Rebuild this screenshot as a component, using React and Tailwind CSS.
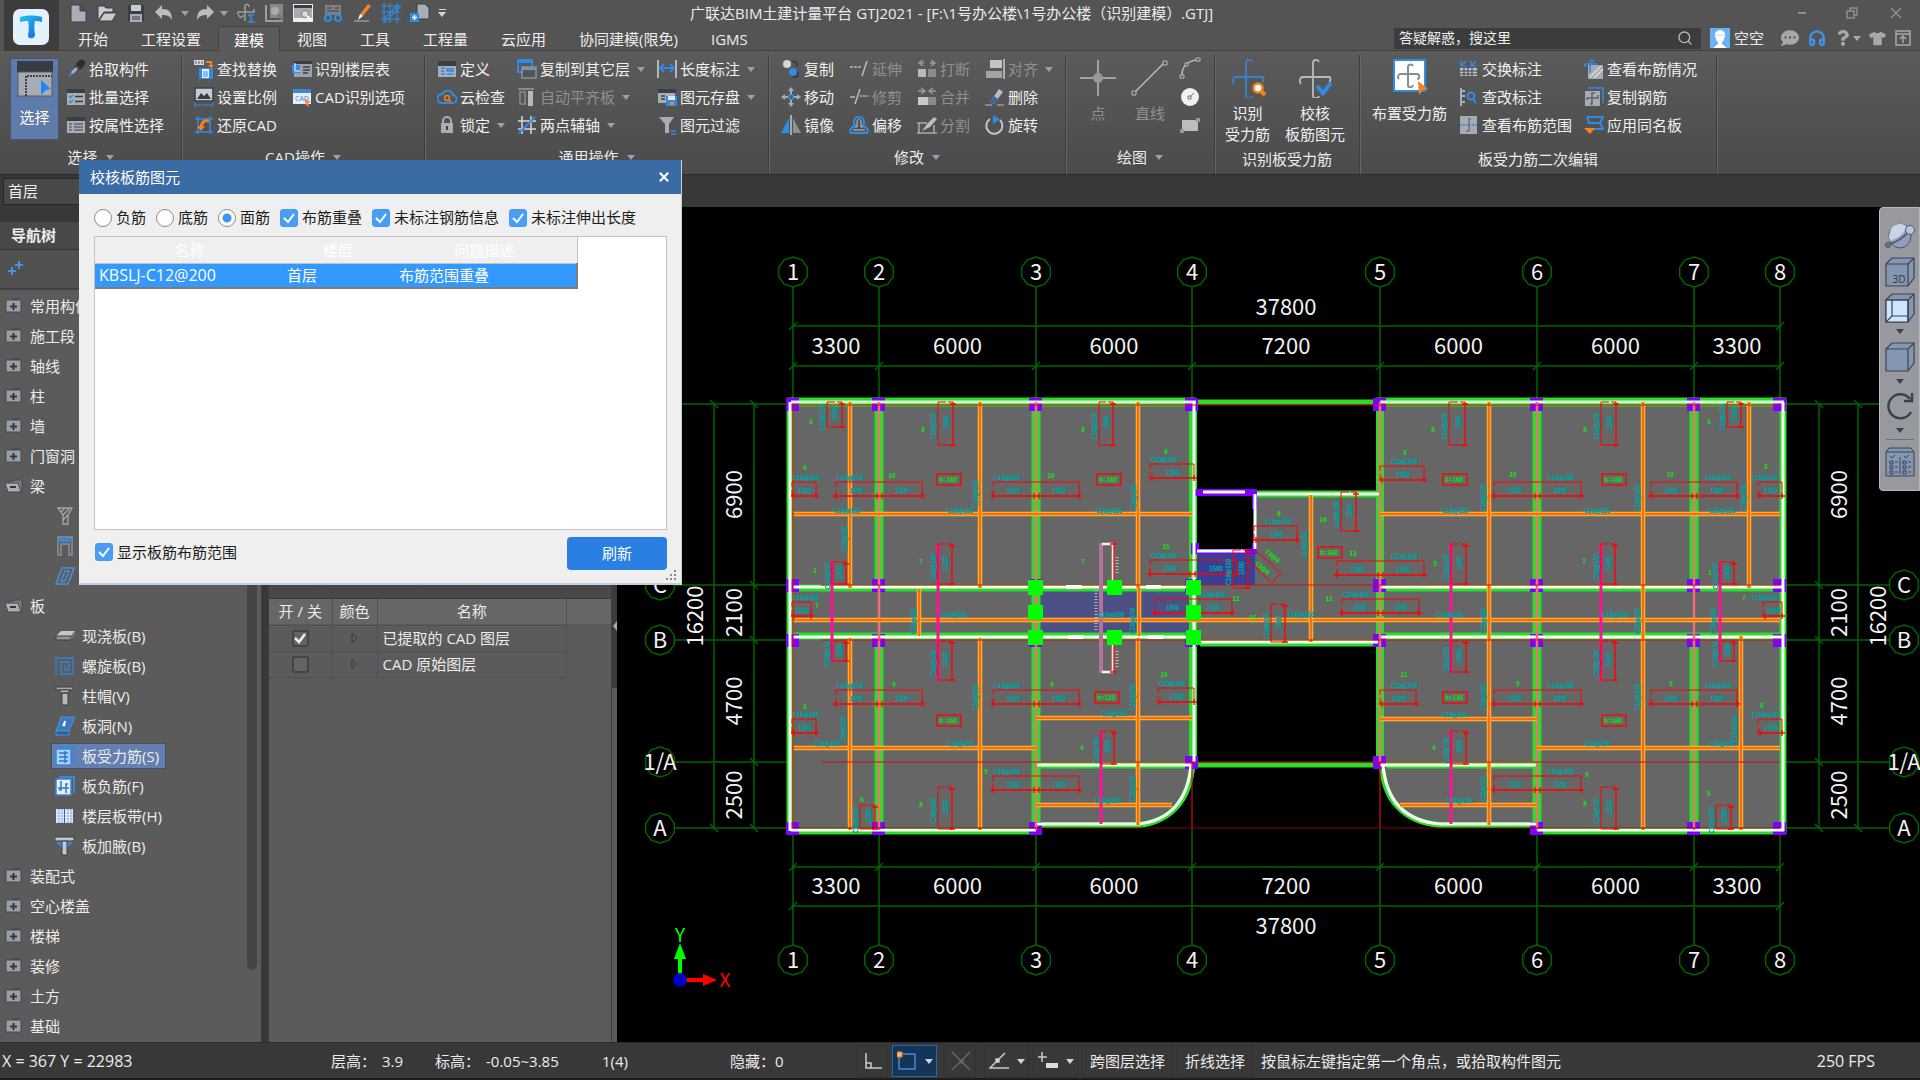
import { Fragment } from "react";
import { FaQuestion, FaTshirt, FaCommentDots } from "react-icons/fa";
import { Headphones, Search } from "lucide-react";
import { clsx } from "clsx";

/* ---------- icons ---------- */

const G = "#a9adb5";
const B = "#2f8be8";
const O = "#f58220";
const D = "#3a3e45";

const icons = {
  picker: (
    <>
      <path d="M2 18l3-5 6-6 2 2-6 6z" fill={B} />
      <path d="M9 7l4 4M11 5l4 4 3-4c1-3-2-4-4-3z" stroke="#2b2e33" strokeWidth="2" fill="#2b2e33" />
      <path d="M5 13l5-5 2 2-5 5z" fill={G} />
    </>
  ),
  batch: (
    <>
      <path d="M1 2h18v4H1z" fill={D} />
      <path d="M1 6h18v12H1z" fill={G} />
      <path d="M3 9l1.5 1.5L7 8M3 14l1.5 1.5L7 13" stroke={B} strokeWidth="1.5" fill="none" />
      <path d="M9 9.5h8M9 14.5h8" stroke={D} strokeWidth="1.5" />
    </>
  ),
  attr: (
    <>
      <path d="M1 2h18v4H1z" fill={D} />
      <path d="M1 6h18v12H1z" fill={G} />
      <path d="M3 9h3M3 12h3M3 15h3M8 9h9M8 12h9M8 15h9" stroke="#5f646d" strokeWidth="1.5" />
    </>
  ),
  replace: (
    <>
      <path d="M0 1h10v5H0z" fill="#d8dade" />
      <path d="M2 2v3M5 2v3M8 2v3" stroke="#555" />
      <path d="M12 3h5v3" stroke={O} strokeWidth="2" fill="none" />
      <path d="M14 6h6l-3 3z" fill={O} />
      <path d="M5 9h14v11H5z" fill={B} />
      <path d="M8 10h7v9H8z" fill="#e9f2fc" />
      <path d="M9 13h5M9 15h5M9 17h5" stroke={B} />
    </>
  ),
  scale: (
    <>
      <path d="M1 1h18v13H1z" fill="#c9cbd2" stroke={D} strokeWidth="1.5" />
      <path d="M3 12l4-6 3 3 3-3 4 6z" fill={D} />
      <path d="M1 18h18M1 16v4M19 16v4" stroke={B} strokeWidth="1.5" strokeDasharray="2 1" />
    </>
  ),
  restore: (
    <>
      <path d="M4 1v18M16 1v18M1 4h18M1 17h18" stroke={B} strokeWidth="1.5" />
      <path d="M15 6c-6-1-8 3-8 7" stroke={O} strokeWidth="3" fill="none" />
      <path d="M3 11h8l-4 5z" fill={O} />
    </>
  ),
  floorTable: (
    <>
      <path d="M2 2h18v4H2z" fill={D} />
      <path d="M2 5h18v13H2z" fill="#9da2aa" />
      <path d="M11 8h7M11 11h7M11 14h5" stroke={D} strokeWidth="1.5" />
      <path d="M0 6h8v8H0z" fill={B} />
      <path d="M3 4v8h5" stroke="#fff" fill="none" />
    </>
  ),
  cadOption: (
    <>
      <path d="M1 2h18v4H1z" fill="#3b86d8" />
      <path d="M1 6h18v11H1z" fill="#e5effa" />
      <text x="10" y="14" fontSize="7" textAnchor="middle" fill={B}>CAD</text>
      <path d="M12 11l7 4-3 1 1 4-3-2z" fill="#f08a5a" />
    </>
  ),
  define: (
    <>
      <path d="M1 2h18v5H1z" fill={D} />
      <path d="M1 7h18v11H1z" fill={G} />
      <path d="M4 9h4M4 12h3M4 15h4M10 10h6v2h-6zM10 15h6" stroke={B} fill="none" strokeWidth="1.5" />
    </>
  ),
  cloud: (
    <>
      <path d="M5 16a4.5 4.5 0 0 1 0-9 6 6 0 0 1 11 1 4 4 0 0 1-1 8z" fill="none" stroke={B} strokeWidth="2" />
      <circle cx="10" cy="11" r="2.5" fill="none" stroke={O} strokeWidth="1.5" />
      <path d="M12 13l2 2" stroke={O} strokeWidth="1.5" />
    </>
  ),
  lock: (
    <>
      <path d="M6 9V6a4 4 0 0 1 8 0v3" fill="none" stroke={G} strokeWidth="2" />
      <path d="M4 8h12v10H4z" fill={G} />
      <path d="M10 11v4" stroke={D} strokeWidth="2" />
    </>
  ),
  copyFloor: (
    <>
      <path d="M1 1h14v12H1z" fill="none" stroke={B} strokeWidth="2" />
      <path d="M1 1h14v3H1z" fill={B} />
      <path d="M5 8h14v11H5z" fill="#555" stroke="#84929c" strokeWidth="1.5" />
      <path d="M5 8h14v3H5z" fill="#84929c" />
    </>
  ),
  autoAlign: (
    <>
      <path d="M1 2h16" stroke="#9a9a9a" strokeWidth="1.5" />
      <path d="M3 5h5v12H3z" fill="none" stroke="#8a8a8a" strokeWidth="1.5" />
      <path d="M11 4h5v15h-5z" fill="#b8b8b8" />
    </>
  ),
  twoPoint: (
    <>
      <path d="M5 1v18M14 1v18M1 6h18M1 14h18" stroke="#d4d6da" strokeWidth="1.5" />
      <path d="M2 18L18 2" stroke={B} strokeWidth="2" />
    </>
  ),
  length: (
    <>
      <path d="M1 1v18M19 1v18" stroke="#d4d6da" strokeWidth="1.5" />
      <path d="M4 9h12M7 5L3 9l4 4M13 5l4 4-4 4" stroke={B} strokeWidth="2" fill="none" />
    </>
  ),
  save: (
    <>
      <path d="M1 2h18v4H1z" fill={D} />
      <path d="M1 6h17v10H1z" fill={G} />
      <path d="M4 9h4M4 12h4" stroke={D} strokeWidth="1.5" />
      <path d="M9 9h11v10H9z" fill={B} />
      <path d="M11 9h7v4h-7z" fill="#dfe9f5" />
      <path d="M13 15h4v3h-4z" fill={O} />
    </>
  ),
  filter: (
    <>
      <path d="M2 2h15l-5 7v9H8V9z" fill={G} />
      <path d="M14 16h5M14 19h5" stroke={B} strokeWidth="1.5" />
    </>
  ),
  copy: (
    <>
      <circle cx="6" cy="5" r="4" fill="#d5d5d5" />
      <path d="M11 3c4-1 6 1 5 4" stroke={D} strokeWidth="2" fill="none" />
      <circle cx="14" cy="15" r="4" fill={D} />
      <circle cx="12" cy="13" r="4" fill={B} />
    </>
  ),
  move: (
    <>
      <path d="M10 0l3 4h-2v3H9V4H7zM10 20l3-4h-2v-3H9v3H7zM0 10l4-3v2h3v2H4v2zM20 10l-4-3v2h-3v2h3v2z" fill={G} />
      <path d="M8 8h4v4H8z" fill="none" stroke={B} strokeWidth="1.5" />
    </>
  ),
  mirror: (
    <>
      <path d="M8 3v15H0z" fill={B} />
      <path d="M12 3v15h8z" fill="#8b8f97" />
      <path d="M10 0v20" stroke="#c4c6ca" strokeWidth="1.5" />
    </>
  ),
  extend: <path d="M1 8h3M5 8h3M9 8h3M13 17l5-15" stroke="#bbb" strokeWidth="1.5" fill="none" />,
  trim: <path d="M1 10h5M6 17l5-15M11 9h2M14 9h2M17 9h2" stroke="#bbb" strokeWidth="1.5" />,
  offset: (
    <>
      <path d="M2 18h16c2-3 0-6-4-7 2-4 1-9-4-9S4 7 6 11c-4 1-6 4-4 7z" fill="none" stroke={B} strokeWidth="2" />
      <path d="M4 15h12M8 12V6c1-2 3-2 4 0v6M8 12H6M12 12h2" stroke="#c4c6ca" fill="none" />
    </>
  ),
  break: (
    <>
      <path d="M6 1L2 4l4 3M14 1l4 3-4 3M2 4h5M18 4h-5" stroke="#999" strokeWidth="1.5" fill="none" />
      <path d="M1 10h8v8H1z" fill="#b9b9b9" />
      <path d="M11 10h8v8h-8z" fill="#8a8a8a" />
    </>
  ),
  merge: (
    <>
      <path d="M4 1l4 3-4 3M16 1l-4 3 4 3M1 4h6M19 4h-6" stroke="#999" strokeWidth="1.5" fill="none" />
      <path d="M1 10h10v8H1z" fill="#c9c9c9" />
      <path d="M11 10h8v8h-8z" fill="#8a8a8a" />
    </>
  ),
  split: (
    <>
      <path d="M2 8v10h15v-8M0 8h10M0 18h20" stroke="#aaa" strokeWidth="1.5" fill="none" />
      <path d="M5 16l5-7 7-7 3 2-7 8z" fill="#bdbdbd" />
    </>
  ),
  align: (
    <>
      <path d="M5 1h12v8H5z" fill="#c4c4c4" />
      <path d="M1 12h16v7H1z" fill="#a4a4a4" />
      <path d="M19 0v20" stroke="#ccc" strokeWidth="1.5" />
    </>
  ),
  erase: (
    <>
      <path d="M5 15l9-13 4 3-9 12z" fill="#b9bcc2" />
      <path d="M5 15l4-6 4 3-4 5z" fill="#38689c" />
      <path d="M0 18h7M12 18h7" stroke="#999" strokeWidth="1.5" />
    </>
  ),
  rotate: (
    <>
      <path d="M5 4a8 8 0 1 0 10 1" fill="none" stroke="#c4c6ca" strokeWidth="2" />
      <path d="M8 0l7 4-7 5z" fill={B} />
    </>
  ),
  swap: (
    <>
      <path d="M3 6l4-4M2 2v5h5M13 6l4-4M12 2v5h5" stroke={B} fill="none" strokeWidth="1.5" />
      <path d="M1 9h17v8H1z" fill="#c0c3c9" />
      <path d="M1 12h17M1 15h17M5 9v8M9 9v8M13 9v8" stroke={D} />
    </>
  ),
  check: (
    <>
      <path d="M2 1v18M2 4h4M2 9h4M2 15h4" stroke={G} strokeWidth="2" />
      <circle cx="12" cy="9" r="3.5" fill="none" stroke={B} strokeWidth="2" />
      <path d="M14 12l3 4" stroke={B} strokeWidth="2" />
    </>
  ),
  range: (
    <>
      <path d="M1 1h17v18H1z" fill="#a7abb3" />
      <path d="M1 10h17" stroke={B} strokeWidth="1.5" strokeDasharray="2 1" />
      <path d="M12 4h-2v12H7" stroke="#6c7078" strokeWidth="1.5" fill="none" />
    </>
  ),
  rebarInfo: (
    <>
      <path d="M4 6h15v14H4z" fill="#a7abb3" />
      <path d="M6 18L17 7M10 19l9-9" stroke="#d8dadf" strokeWidth="1.5" />
      <path d="M6 14V3c0-3 4-2 3 0M1 8V5h12" stroke={B} strokeWidth="1.5" fill="none" />
    </>
  ),
  copyBar: (
    <>
      <path d="M4 1h15v15" stroke={B} strokeWidth="1.5" fill="none" />
      <path d="M1 4h15v15H1z" fill="#a7abb3" />
      <path d="M11 6H8v11H6M3 13v-2h11v-3" stroke="#5e636b" strokeWidth="1.5" fill="none" />
    </>
  ),
  applySame: (
    <>
      <path d="M3 2h16l-3 6 3 6H9M3 2l2 6h11" fill="none" stroke={B} strokeWidth="2" />
      <path d="M0 13h11l-5 6z" fill={O} />
    </>
  ),
};

function Ico({ name }) {
  return (
    <svg viewBox="0 0 20 20" className="size-5 shrink-0" aria-hidden="true">
      {icons[name]}
    </svg>
  );
}

function Caret({ className }) {
  return (
    <svg viewBox="0 0 8 5" className={clsx("h-[5px] w-2 shrink-0", className)} aria-hidden="true">
      <path d="M0 0h8L4 5z" fill="currentColor" />
    </svg>
  );
}

/* ---------- title bar ---------- */

const quickIcons = [
  ["新建", "w-[29px]", <path d="M3 2h9l6 6v11H3z M12 2v6h6" fill={G} stroke={D} strokeWidth="1" />],
  ["打开", "w-[29px]", <path d="M1 18V3h6l2 2h7v4H7z M7 10h13l-5 8H2z" fill="#c9cbd0" stroke={D} strokeWidth="1" />],
  ["保存", "w-[29px]", <><path d="M2 2h16v16H2z" fill={D} /><path d="M5 2h10v6H5z" fill="#c9cbd0" /><path d="M4 11h12v8H4z" fill={G} /><path d="M6 14h8M6 16h8" stroke={D} /></>],
  ["撤销", "w-[28px]", <path d="M8 2v4c7 0 10 3 10 11-2-4-5-5-10-5v4L1 9z" fill="#b9bcc4" />],
  ["caret", "w-[14px]"],
  ["恢复", "w-[25px]", <path d="M12 2v4C5 6 2 9 2 17c2-4 5-5 10-5v4l7-7z" fill="#b9bcc4" />],
  ["caret", "w-[14px]"],
  ["汇总", "w-[29px]", <><path d="M9 18V4c0-4 4-3 4 0M2 12V9h16v-3M3 12c0 3 4 3 4 0" stroke="#9a9da3" strokeWidth="1.5" fill="none" /><path d="M18 12h-5l3 4-3 3h6" stroke={B} strokeWidth="1.5" fill="none" /></>],
  ["查看", "w-[28px]", <><path d="M2 2v16h17" stroke="#9a9da3" strokeWidth="2" fill="none" /><path d="M6 1h13v14H6z" fill="#85888e" /><circle cx="11" cy="8" r="4" fill="#aaa" /><path d="M14 11l5 6" stroke="#777" strokeWidth="3" /></>],
  ["报表", "w-[30px]", <><path d="M0 1h20v18H0z" fill="#eceded" /><path d="M1 3h18v12H1z" fill="#a7abb3" /><path d="M1 2h18v3H1z" fill={D} /><circle cx="12" cy="11" r="3.5" fill="#ddd" stroke="#777" /><path d="M14 13l4 4" stroke="#fff" strokeWidth="2" /></>],
  ["构件", "w-[29px]", <><path d="M2 2h16v10H2z" fill="#7d8087" /><path d="M4 5h5M12 5h4M4 8h12" stroke={D} /><circle cx="5" cy="15" r="3" fill="none" stroke={B} strokeWidth="2" /><circle cx="15" cy="15" r="3" fill="none" stroke={B} strokeWidth="2" /></>],
  ["格式刷", "w-[29px]", <><path d="M16 1l3 2-8 10-3-2z" fill={O} /><path d="M8 11l3 2-5 4z" fill="#fff" /><path d="M2 18h15" stroke="#999" strokeWidth="1.5" /></>],
  ["轴网", "w-[29px]", <path d="M3 0v20M9 0v20M16 0v20M0 3h20M0 9h20M0 16h20M3 16L16 3M3 20L20 3" stroke={B} strokeWidth="1.2" fill="none" />],
  ["添加", "w-[29px]", <><path d="M7 1h8l4 4v11H7z" fill={G} stroke={D} /><path d="M0 10h9v9H0z" fill={B} /><path d="M4.5 12v5M2 14.5h5" stroke="#fff" strokeWidth="1.5" /></>],
];

function QuickAccess() {
  return (
    <div className="flex h-[26px] items-center pl-1">
      {quickIcons.map(([name, width, art], i) =>
        name === "caret" ? (
          <button key={i} aria-label="更多" className={clsx("flex justify-center text-gray-400", width)}>
            <Caret />
          </button>
        ) : (
          <button key={i} aria-label={name} className={clsx("flex justify-center", width)}>
            <svg viewBox="0 0 20 20" className="size-5">{art}</svg>
          </button>
        ),
      )}
      <button aria-label="自定义" className="flex w-4 flex-col items-center gap-0.5 text-gray-300">
        <span className="h-px w-[7px] bg-gray-300" />
        <Caret />
      </button>
    </div>
  );
}

const tabs = ["开始", "工程设置", "建模", "视图", "工具", "工程量", "云应用", "协同建模(限免)", "IGMS"];

function Header() {
  return (
    <header className="flex h-[51px] shrink-0 border-b border-[#3f3f3f] bg-[#545454]">
      <div className="flex h-[54px] w-[59px] shrink-0 items-center justify-center border-l-4 border-[#545454] bg-[#3d3d3d] pr-0.5">
        <svg viewBox="0 0 36 36" className="size-9">
          <defs>
            <linearGradient id="logo" x1="0" y1="0" x2="1" y2="1">
              <stop offset="0" stopColor="#2bc0f5" />
              <stop offset="1" stopColor="#1267d8" />
            </linearGradient>
          </defs>
          <rect width="36" height="36" rx="7" fill="#e3f3fe" />
          <path d="M7 8c7-2 15-2 22 0v5c-3-1-5-1-7-1-1 5-1 9 0 13 1 5-8 6-7 1 1-5 1-9 0-14-3 0-5 0-8 1z" fill="url(#logo)" />
        </svg>
      </div>
      <div className="flex min-w-0 flex-1 flex-col">
        <div className="flex items-center">
          <QuickAccess />
          <h1 className="min-w-0 flex-1 truncate pl-[240px] text-[15px] leading-[26px]">
            广联达BIM土建计量平台 GTJ2021 - [F:\1号办公楼\1号办公楼（识别建模）.GTJ]
          </h1>
          <div className="flex w-[138px] items-center justify-between pr-[18px] text-[#8e8e8e]">
            <button aria-label="最小化" className="ml-4 h-0.5 w-2 bg-[#8e8e8e]" />
            <button aria-label="还原" className="ml-2">
              <svg viewBox="0 0 12 12" className="size-3" fill="none" stroke="currentColor" strokeWidth="1.5">
                <path d="M1 4h7v7H1zM4 4V1h7v7H8" />
              </svg>
            </button>
            <button aria-label="关闭">
              <svg viewBox="0 0 12 12" className="size-3" stroke="currentColor" strokeWidth="1.5">
                <path d="M1 1l10 10M11 1L1 11" />
              </svg>
            </button>
          </div>
        </div>
        <div className="flex h-6 items-center">
          <nav className="ml-[3px] flex h-full gap-px">
            {tabs.map((tab) => (
              <button
                key={tab}
                className={clsx(
                  "h-[25px] text-[15px] leading-[26px] whitespace-nowrap",
                  tab === "建模" ? "rounded-t border border-b-0 border-[#434343] bg-[#5b5b5b] px-[15px] text-white" : "px-4",
                )}
              >
                {tab}
              </button>
            ))}
          </nav>
          <label className="ml-auto flex h-[21px] w-[307px] items-center bg-[#3c3c3c] pr-2 pl-[5px]">
            <input aria-label="搜索" placeholder="答疑解惑，搜这里" className="min-w-0 flex-1 bg-transparent text-sm leading-5 outline-none placeholder:text-[#eee]" />
            <Search className="size-4 text-[#bbb]" />
          </label>
          <svg viewBox="0 0 20 20" className="ml-[9px] size-5">
            <path d="M0 0h20v20H0z" fill="#69b1f5" />
            <path d="M5 7a5 5 0 0 1 10 0l-1 5-2 2v2l5 4H3l5-4v-2l-2-2z" fill="#fff" />
            <path d="M4 7h12" stroke="#b8d8f6" />
          </svg>
          <span className="ml-1 text-[15px] leading-5">空空</span>
          <div className="ml-[17px] flex w-[139px] items-center justify-between pr-[9px] text-[#a8a8a8]">
            <button aria-label="消息"><FaCommentDots className="size-[18px]" /></button>
            <button aria-label="客服" className="text-[#3d94f2]"><Headphones className="size-[18px]" strokeWidth={3} /></button>
            <button aria-label="帮助" className="flex items-center gap-0.5"><FaQuestion className="size-4" /><Caret /></button>
            <button aria-label="换肤"><FaTshirt className="size-[17px]" /></button>
            <button aria-label="收起功能区">
              <svg viewBox="0 0 16 16" className="size-4" fill="none" stroke="currentColor" strokeWidth="1.5">
                <path d="M1 1h14v14H1zM1 4h14M8 13V7M5 9l3-3 3 3" />
              </svg>
            </button>
          </div>
        </div>
      </div>
    </header>
  );
}

/* ---------- ribbon ---------- */

function Cmd({ icon, label, caret, disabled }) {
  return (
    <button
      className={clsx(
        "flex h-7 items-center gap-[3px] text-[15px] leading-7 whitespace-nowrap",
        disabled ? "text-[#909090]" : "text-[#f0f0f0]",
      )}
    >
      <Ico name={icon} />
      {label}
      {caret ? <Caret className="ml-1 text-gray-400" /> : null}
    </button>
  );
}

function Group({ title, caret, width, low, gap = "gap-x-[15px]", pad = "pl-3", children }) {
  return (
    <section className={clsx("flex shrink-0 flex-col border-r border-[#3e3e3e] shadow-[1px_0_0_#666]", width)}>
      <div className={clsx("flex h-[84px]", gap, pad)}>{children}</div>
      <h2 className={clsx("flex items-center justify-center gap-2 text-[15px] leading-[34px]", low ? "pt-[3px]" : "pt-px")}>
        {title}
        {caret ? <Caret className="text-gray-400" /> : null}
      </h2>
    </section>
  );
}

function Col({ items }) {
  return (
    <div className="flex flex-col">
      {items.map(([icon, label, opt]) => (
        <Cmd key={label} icon={icon} label={label} caret={opt?.includes("c")} disabled={opt?.includes("d")} />
      ))}
    </div>
  );
}

function BigCmd({ art, lines, disabled }) {
  return (
    <button
      className={clsx(
        "flex flex-col items-center self-start pt-[3px] text-[15px] leading-[21px]",
        disabled ? "text-[#909090]" : "text-[#f0f0f0]",
      )}
    >
      <svg viewBox="0 0 40 40" className="mb-[5px] size-10 shrink-0" fill="none" aria-hidden="true">{art}</svg>
      {lines.map((line) => (
        <span key={line}>{line}</span>
      ))}
    </button>
  );
}

const crossBar = "M24 4c-1-3-6-3-6 1v33c0 3 5 3 6 0M6 26c-2-3-1-7 2-7h26c2 0 2 4 0 5";

function Ribbon() {
  return (
    <div className="flex h-[123px] shrink-0 bg-linear-to-b from-[#5b5b5b] to-[#4b4b4b] pt-1">
      <Group title="选择" caret width="w-[182px]" gap="gap-x-[7px]" pad="pl-[10px]">
        <button className="mt-[3px] flex h-[82px] w-[49px] flex-col items-center gap-2 border border-[#44546f] bg-[#5f7ba9] pt-0.5 text-[15px] leading-6 text-white">
          <svg viewBox="0 0 36 36" className="size-9">
            <path d="M0 0h36v11H0z" fill="#373b42" />
            <path d="M1 11h34v24H1z" fill="#a7abb3" stroke="#555a64" />
            <path d="M9 35V15h26" stroke="#222" strokeWidth="1.5" strokeDasharray="2 1" fill="none" />
            <path d="M24 19l10 9-5 1-5 5z" fill="#1e88ee" />
          </svg>
          选择
        </button>
        <Col items={[["picker", "拾取构件"], ["batch", "批量选择"], ["attr", "按属性选择"]]} />
      </Group>
      <Group title="CAD操作" caret width="w-[243px]">
        <Col items={[["replace", "查找替换"], ["scale", "设置比例"], ["restore", "还原CAD"]]} />
        <Col items={[["floorTable", "识别楼层表"], ["cadOption", "CAD识别选项"]]} />
      </Group>
      <Group title="通用操作" caret width="w-[344px]" gap="gap-x-3">
        <Col items={[["define", "定义"], ["cloud", "云检查"], ["lock", "锁定", "c"]]} />
        <Col items={[["copyFloor", "复制到其它层", "c"], ["autoAlign", "自动平齐板", "cd"], ["twoPoint", "两点辅轴", "c"]]} />
        <Col items={[["length", "长度标注", "c"], ["save", "图元存盘", "c"], ["filter", "图元过滤"]]} />
      </Group>
      <Group title="修改" caret width="w-[297px]">
        <Col items={[["copy", "复制"], ["move", "移动"], ["mirror", "镜像"]]} />
        <Col items={[["extend", "延伸", "d"], ["trim", "修剪", "d"], ["offset", "偏移"]]} />
        <Col items={[["break", "打断", "d"], ["merge", "合并", "d"], ["split", "分割", "d"]]} />
        <Col items={[["align", "对齐", "cd"], ["erase", "删除"], ["rotate", "旋转"]]} />
      </Group>
      <Group title="绘图" caret width="w-[149px]" gap="gap-x-3">
        <BigCmd
          disabled
          lines={["点"]}
          art={<><path d="M20 2v14M20 24v14M2 20h14M24 20h14" stroke="#bbb" strokeWidth="1.5" /><circle cx="20" cy="20" r="5" fill="#999" /></>}
        />
        <BigCmd
          disabled
          lines={["直线"]}
          art={<><path d="M5 34L34 5" stroke="#bbb" strokeWidth="1.5" /><path d="M2 33h4v4H2zM33 3h4v4h-4z" fill="#555" stroke="#bbb" /></>}
        />
        <div className="-ml-1 flex flex-col gap-1 pt-px">
          <button aria-label="弧线">
            <svg viewBox="0 0 24 24" className="size-6" fill="none" stroke="#bbb" strokeWidth="1.5">
              <path d="M4 19C4 11 9 5 19 4" />
              <path d="M2 19h4v3H2zM18 2h4v3h-4zM7 7h3v3H7z" fill="#555" strokeWidth="1" />
            </svg>
          </button>
          <button aria-label="圆">
            <svg viewBox="0 0 24 24" className="size-6">
              <circle cx="12" cy="13" r="9" fill="#f0f0f0" />
              <path d="M12 13l4-4" stroke="#777" />
              <path d="M10 12h3v3h-3z" fill="none" stroke="#777" />
            </svg>
          </button>
          <button aria-label="矩形">
            <svg viewBox="0 0 24 24" className="size-6">
              <path d="M4 8h16v11H4z" fill="#bdbdbd" />
              <path d="M18 6h4v4h-4zM2 17h4v4H2z" fill="#999" />
            </svg>
          </button>
        </div>
      </Group>
      <Group title="识别板受力筋" low width="w-[145px]" pad="pl-[10px]">
        <BigCmd
          lines={["识别", "受力筋"]}
          art={<><path d={crossBar} stroke="#3b80cf" strokeWidth="1.8" /><path d="M32 32l5 5" stroke={O} strokeWidth="4" /><circle cx="30" cy="30" r="4.5" fill="#fff" stroke={O} strokeWidth="2.5" /></>}
        />
        <BigCmd
          lines={["校核", "板筋图元"]}
          art={<><path d={crossBar} stroke="#bbb" strokeWidth="1.8" /><path d="M22 28l6 7 8-10" stroke={B} strokeWidth="4" /></>}
        />
      </Group>
      <Group title="板受力筋二次编辑" low width="w-[357px]" gap="gap-x-3">
        <BigCmd
          lines={["布置受力筋"]}
          art={<><path d="M4 2h31v31H4z" fill="#fff" stroke={B} strokeWidth="2" /><path d="M23 8c-1-2-5-2-5 1v18c0 3 4 3 5 0M9 21c-2-2-1-5 2-5h16c3 0 3 5 0 5" stroke="#888c93" strokeWidth="2" /><path d="M28 23l10 8-5 1-4 5z" fill={O} /></>}
        />
        <Col items={[["swap", "交换标注"], ["check", "查改标注"], ["range", "查看布筋范围"]]} />
        <Col items={[["rebarInfo", "查看布筋情况"], ["copyBar", "复制钢筋"], ["applySame", "应用同名板"]]} />
      </Group>
    </div>
  );
}

/* ---------- navigation tree ---------- */

const tree = [
  { label: "常用构件类型" },
  { label: "施工段" },
  { label: "轴线" },
  { label: "柱" },
  { label: "墙" },
  { label: "门窗洞" },
  { label: "梁", open: true },
  { label: "梁(L)", art: "beam" },
  { label: "连梁(G)", art: "link" },
  { label: "圈梁(E)", art: "ring" },
  { label: "板", open: true },
  { label: "现浇板(B)", art: "slab" },
  { label: "螺旋板(B)", art: "spiral" },
  { label: "柱帽(V)", art: "cap" },
  { label: "板洞(N)", art: "hole" },
  { label: "板受力筋(S)", art: "bar", active: true },
  { label: "板负筋(F)", art: "negBar" },
  { label: "楼层板带(H)", art: "band" },
  { label: "板加腋(B)", art: "haunch" },
  { label: "装配式" },
  { label: "空心楼盖" },
  { label: "楼梯" },
  { label: "装修" },
  { label: "土方" },
  { label: "基础" },
];

const treeArt = {
  beam: <path d="M3 2h14l-4 7v9H8V9zM6 6l4-4M8 9l6-6M8 14l5-5" fill="none" stroke="#a4a7ad" strokeWidth="1.3" />,
  link: <><path d="M3 1h14v18h-3V8H6v11H3z" fill="none" stroke="#8d9196" strokeWidth="1.5" /><path d="M3 2h14v4H3z" fill="#3d86d6" /></>,
  ring: <path d="M7 2h12l-6 16H1zM10 5h4l-4 10H6z" fill="none" stroke="#4a90dc" strokeWidth="1.5" />,
  slab: <><path d="M6 5h14l-4 5H1z" fill="#c3c6cc" /><path d="M1 10h15v4H1z" fill="#8f949c" stroke={D} /><path d="M16 10l4-5v4l-4 5z" fill="#6c717a" /></>,
  spiral: <path d="M1 19V2h17v16H6V6h8v8h-4V9" fill="none" stroke="#3f78b8" strokeWidth="1.8" />,
  cap: <><path d="M1 1h17v3H1z" fill="#a5a8ae" stroke={D} /><path d="M4 4h11l-2 3H6zM7 7h6v12H7z" fill="#b4b7bd" stroke={D} /></>,
  hole: <><path d="M6 1h14l-6 14H1z" fill="#3d78bb" stroke="#4a90dc" /><path d="M1 15h13v4H1z" fill="#2f5f97" stroke="#4a90dc" /><path d="M10 5l-1 5M8 10l2-4" stroke="#fff" strokeWidth="2" /></>,
  bar: <><path d="M4 1h15v16" fill="none" stroke="#3d86d6" strokeWidth="2" /><path d="M1 3h15v16H1z" fill="#a9d2f8" stroke="#3d86d6" strokeWidth="1.5" /><path d="M4 7h9M4 11h9M4 15h9M10 5v12" stroke="#2f78c8" strokeWidth="1.5" /></>,
  negBar: <><path d="M4 1h15v16" fill="none" stroke="#3d86d6" strokeWidth="2" /><path d="M1 3h15v16H1z" fill="#e4effb" stroke="#3d86d6" strokeWidth="1.5" /><path d="M6 5v9H4M11 17V8h2M3 12h11" stroke="#2f78c8" strokeWidth="1.5" fill="none" /></>,
  band: <><path d="M1 3h8v14H1zM10 3h8v14h-8z" fill="#d3e6fb" /><path d="M4 3v14M7 3v14M13 3v14M16 3v14" stroke="#6ea4dc" strokeDasharray="2 1" /></>,
  haunch: <><path d="M1 6h17l-6 6H7z" fill={B} /><path d="M0 1h19v4H0z" fill="#c3c6cc" stroke={D} /><path d="M7 5h5v14H7z" fill="#c3c6cc" stroke={D} /></>,
};

function TreeRow({ label, art, open, active }) {
  if (art) {
    return (
      <li className="flex h-[30px] items-center pl-[51px]">
        <button
          className={clsx(
            "flex h-[26px] items-center gap-[7px] border pr-1.5 pl-[3px] text-[15px] leading-6",
            active ? "border-[#464f60] bg-[#6480b0]" : "border-transparent",
          )}
        >
          <svg viewBox="0 0 20 20" className="size-5">{treeArt[art]}</svg>
          {label}
        </button>
      </li>
    );
  }
  return (
    <li className="flex h-[30px] items-center">
      <button className="flex items-center gap-[7px] pl-[5px] text-[15px] leading-6 whitespace-nowrap">
        <svg viewBox="0 0 18 18" className="size-[18px]">
          {open ? (
            <>
              <path d="M4 4h5l1-1h6l1 1v11H4z" fill="#787c83" stroke="#44484f" />
              <path d="M0 6h13l3 9H3z" fill="#a9adb5" stroke="#44484f" />
              <path d="M5 10h6" stroke="#333" strokeWidth="2" />
            </>
          ) : (
            <>
              <path d="M7 4V1h8v3" fill="#4a4e55" />
              <path d="M1 3h15v12H1z" fill="#9a9ea6" stroke="#44484f" />
              <path d="M8.5 6v7M5 9.5h7" stroke="#33373d" strokeWidth="2" />
            </>
          )}
        </svg>
        {label}
      </button>
    </li>
  );
}

function NavTree() {
  return (
    <aside className="flex w-[262px] shrink-0 flex-col border-r border-[#3c3c3c] bg-[#5b5b5b]">
      <div className="h-[15px] shrink-0 bg-[#383838]" />
      <h2 className="h-7 shrink-0 border-b border-[#333] bg-[#484848] pl-[11px] text-[15px] leading-[27px] font-bold">
        导航树
      </h2>
      <div className="flex h-10 shrink-0 items-center border-b-2 border-[#404040] bg-[#505050] pl-2">
        <button aria-label="展开">
          <svg viewBox="0 0 18 18" className="size-[18px]" stroke="#4a90dc" strokeWidth="2">
            <path d="M0 11h8M4 7v8M7 5h8M11 1v8" />
          </svg>
        </button>
      </div>
      <div className="flex flex-1 pt-px">
        <ul className="flex-1">
          {tree.map((row) => (
            <TreeRow key={row.label} {...row} />
          ))}
        </ul>
        <div className="mr-1 mb-[72px] w-[10px] rounded-full bg-[#454545]" />
      </div>
    </aside>
  );
}

/* ---------- layer panel ---------- */

const layers = [
  { name: "已提取的 CAD 图层", on: true },
  { name: "CAD 原始图层", on: false },
];

function LayerPanel() {
  return (
    <aside className="ml-[6px] flex w-[344px] shrink-0 flex-col border-x border-[#3c3c3c] bg-[#5b5b5b]">
      <div className="h-[15px] shrink-0 bg-[#383838]" />
      <h2 className="h-7 shrink-0 bg-[#484848] pl-[11px] text-[15px] leading-[27px] font-bold">图层管理</h2>
      <div className="flex-none basis-[305px]" />
      <div className="flex h-11 shrink-0 gap-3 border-b border-[#3a3a3a] bg-[#484848] pl-[5px] text-[15px] leading-[44px]">
        <button>显示指定图层</button>
        <button>隐藏指定图层</button>
      </div>
      <div className="bg-[linear-gradient(#666_25px,transparent_25px)]">
        <table className="w-[298px] border-collapse text-[15px] leading-[25px]">
          <thead>
            <tr className="h-[26px]">
              <th className="w-[63px] border-r border-b border-[#505050] p-0 font-normal">开 / 关</th>
              <th className="w-[45px] border-r border-b border-[#505050] p-0 font-normal">颜色</th>
              <th className="border-r border-b border-[#505050] p-0 font-normal">名称</th>
            </tr>
          </thead>
          <tbody>
            {layers.map((layer) => (
              <tr key={layer.name} className="h-[26px]">
                <td className="border-r border-b border-[#505050] p-0">
                  <label className="grid place-items-center">
                    <input
                      type="checkbox"
                      defaultChecked={layer.on}
                      aria-label={layer.name}
                      className="peer col-start-1 row-start-1 size-[17px] appearance-none rounded-xs border-2 border-[#454545] bg-[#636363]"
                    />
                    <svg viewBox="0 0 12 12" className="pointer-events-none invisible col-start-1 row-start-1 size-3 peer-checked:visible">
                      <path d="M1 6l4 4 6-8" fill="none" stroke="#eee" strokeWidth="2.5" />
                    </svg>
                  </label>
                </td>
                <td className="border-r border-b border-[#505050] p-0">
                  <button aria-label="展开颜色" className="flex w-full justify-center">
                    <svg viewBox="0 0 8 12" className="h-3 w-2">
                      <path d="M1 1l5 5-5 5z" fill="none" stroke="#3a3a3a" />
                    </svg>
                  </button>
                </td>
                <td className="border-r border-b border-[#505050] p-0 pl-[5px]">{layer.name}</td>
              </tr>
            ))}
          </tbody>
        </table>
      </div>
    </aside>
  );
}

/* ---------- drawing ---------- */

const GRID = "#006400";
const CYAN = "#00a0a0";
const X = [793, 879, 1036, 1192, 1380, 1537, 1694, 1780];
const spans = ["3300", "6000", "6000", "7200", "6000", "6000", "3300"];
const Y = [404, 585, 640, 762, 828];
const ySpans = ["6900", "2100", "4700", "2500"];
const yNames = ["D", "C", "B", "1/A", "A"];

const decagon = (cx, cy, r) =>
  Array.from({ length: 10 }, (_, i) => {
    const a = (Math.PI / 5) * i;
    return `${(cx + r * Math.sin(a)).toFixed(1)},${(cy - r * Math.cos(a)).toFixed(1)}`;
  }).join(" ");

function Bubble({ x, y, label }) {
  return (
    <g>
      <polygon points={decagon(x, y, 15)} fill="none" stroke={GRID} strokeWidth="1.5" />
      <text x={x} y={y + 8} textAnchor="middle">{label}</text>
    </g>
  );
}

const slash = (x, y) => `M${x - 4} ${y + 4}L${x + 4} ${y - 4}`;
const backslash = (x, y) => `M${x - 4} ${y - 4}L${x + 4} ${y + 4}`;

function Axes() {
  const rowsY = [366, 867];
  return (
    <g fontSize="22" fill="#f2f2f2">
      <g stroke={GRID} strokeWidth="1.5" fill="none">
        {X.map((x) => (
          <path key={x} d={`M${x} 287V404M${x} 828V945${slash(x, 366)}${slash(x, 867)}`} />
        ))}
        {Y.map((y) => (
          <path key={y} d={`M675 ${y}H793M1780 ${y}H1889${backslash(754, y)}${backslash(1819, y)}`} />
        ))}
        <path d="M793 326H1780M793 366H1780M793 867H1780M793 906H1780M714 404V828M754 404V828M1819 404V828M1858 404V828" />
        <path
          d={[slash(793, 326), slash(1780, 326), slash(793, 906), slash(1780, 906), backslash(714, 404), backslash(714, 828), backslash(1858, 404), backslash(1858, 828)].join("")}
        />
      </g>
      {X.map((x, i) => (
        <Fragment key={x}>
          <Bubble x={x} y={272} label={i + 1} />
          <Bubble x={x} y={960} label={i + 1} />
        </Fragment>
      ))}
      {Y.slice(1).map((y, i) => (
        <Fragment key={y}>
          <Bubble x={660} y={y} label={yNames[i + 1]} />
          <Bubble x={1904} y={y} label={yNames[i + 1]} />
        </Fragment>
      ))}
      <g textAnchor="middle">
        {spans.map((s, i) =>
          rowsY.map((y) => (
            <text key={`${i}-${y}`} x={(X[i] + X[i + 1]) / 2} y={y === 366 ? 354 : 894}>{s}</text>
          )),
        )}
        <text x="1286" y="315">37800</text>
        <text x="1286" y="934">37800</text>
        {ySpans.map((s, i) =>
          [742, 1847].map((x) => (
            <text key={`${i}-${x}`} transform={`translate(${x} ${(Y[i] + Y[i + 1]) / 2}) rotate(-90)`}>{s}</text>
          )),
        )}
        <text transform="translate(703 616) rotate(-90)">16200</text>
        <text transform="translate(1886 616) rotate(-90)">16200</text>
      </g>
    </g>
  );
}

// secondary beams: [x1, y1, x2, y2]
const beams = [
  [793, 514, 1192, 514],
  [793, 620, 1780, 620],
  [793, 748, 1036, 748],
  [1036, 718, 1192, 718],
  [1036, 805, 1172, 805],
  [1380, 514, 1780, 514],
  [1380, 719, 1537, 719],
  [1537, 748, 1780, 748],
  [1400, 805, 1537, 805],
  [850, 402, 850, 588],
  [850, 638, 850, 830],
  [919, 589, 919, 636],
  [980, 402, 980, 588],
  [980, 638, 980, 830],
  [1138, 402, 1138, 588],
  [1139, 588, 1139, 636],
  [1138, 638, 1138, 825],
  [1311, 495, 1311, 642],
  [1489, 402, 1489, 825],
  [1643, 402, 1643, 830],
  [1749, 402, 1749, 588],
  [1741, 636, 1741, 830],
];

const columns = [
  ...X.map((x) => [x, 404]),
  ...X.map((x) => [x, 585]),
  ...X.map((x) => [x, 640]),
  ...[793, 879, 1036, 1537, 1694, 1780].map((x) => [x, 828]),
  [1192, 762],
  [1380, 762],
];

// top bars: [x1, x2, y, axis they cross, label x]
const hBars = [
  [792, 816, 482],
  [836, 922, 482, 879],
  [993, 1079, 482, 1036],
  [1150, 1194, 464],
  [1150, 1237, 560, 1192],
  [1155, 1232, 599, 1192, 1199],
  [792, 811, 602],
  [836, 922, 690, 879],
  [993, 1079, 690, 1036],
  [792, 816, 719],
  [1158, 1194, 688],
  [993, 1079, 776, 1036],
  [1254, 1297, 526, null, 1265],
  [1380, 1424, 466, null, 1391],
  [1494, 1581, 482, 1537, 1548],
  [1651, 1737, 482, 1694, 1705],
  [1758, 1782, 482, null, 1752],
  [1337, 1424, 561, 1380, 1391],
  [1342, 1419, 599, 1380],
  [1763, 1782, 602, null, 1752],
  [1380, 1416, 690, null, 1391],
  [1494, 1581, 690, 1537, 1548],
  [1651, 1737, 690, 1694, 1705],
  [1758, 1782, 719, null, 1752],
  [1494, 1581, 776, 1537, 1548],
];

// top bars across the other way: [x, dimension x, y1, y2]
const vBars = [
  [827, 842, 402, 427],
  [938, 953, 402, 445],
  [1099, 1113, 402, 445],
  [832, 846, 562, 584],
  [938, 952, 544, 584],
  [832, 846, 641, 661],
  [938, 952, 641, 680],
  [1101, 1114, 731, 764],
  [860, 875, 805, 829],
  [938, 952, 787, 829],
  [1341, 1356, 492, 531],
  [1271, 1285, 604, 642],
  [1233, 1248, 550, 588],
  [1449, 1465, 402, 445],
  [1601, 1616, 402, 445],
  [1727, 1741, 402, 427],
  [1451, 1466, 544, 584],
  [1601, 1615, 544, 584],
  [1720, 1734, 562, 584],
  [1451, 1466, 641, 672],
  [1601, 1615, 641, 680],
  [1720, 1734, 641, 661],
  [1451, 1466, 731, 764],
  [1601, 1616, 787, 829],
  [1716, 1731, 805, 829],
];

const slabTags = [
  [937, 474, "h=160"],
  [1097, 474, "h=160"],
  [937, 715, "h=160"],
  [1095, 692, "h=120"],
  [1318, 547, "h=160"],
  [1443, 474, "h=160"],
  [1602, 474, "h=160"],
  [1443, 692, "h=130"],
  [1602, 715, "h=160"],
];

const marks = [
  [811, 424, "5"], [923, 432, "8"], [1083, 432, "8"], [805, 470, "6"], [892, 478, "10"], [1051, 478, "10"],
  [1166, 454, "8"], [1166, 549, "15"], [921, 564, "7"], [1083, 564, "7"], [815, 573, "1"], [817, 608, "7"],
  [894, 687, "9"], [1052, 687, "9"], [1164, 677, "10"], [805, 709, "6"], [1082, 750, "4"], [986, 774, "9"],
  [862, 802, "6"], [921, 807, "8"], [1279, 516, "8"], [1323, 522, "14"], [1353, 556, "13"], [1236, 601, "12"],
  [1329, 601, "12"], [1253, 620, "16"], [1433, 432, "8"], [1585, 432, "8"], [1709, 424, "5"], [1405, 455, "8"],
  [1513, 477, "10"], [1670, 477, "10"], [1766, 469, "6"], [1435, 566, "3"], [1584, 564, "7"], [1710, 575, "1"],
  [1744, 600, "7"], [1404, 677, "11"], [1518, 686, "9"], [1671, 686, "9"], [1762, 708, "6"], [1434, 750, "4"],
  [1587, 777, "9"], [1585, 806, "8"], [1709, 796, "6"],
];

const hCodes = [
  [834, 513], [947, 513], [1096, 513], [941, 617], [1098, 617], [814, 746], [947, 746], [1101, 716], [1095, 803],
  [1288, 617], [1437, 617], [1602, 617], [1442, 513], [1584, 513], [1709, 513], [1442, 717], [1584, 746],
  [1709, 746], [1446, 803],
];

const vCodes = [
  [847, 552], [978, 507], [1136, 511], [916, 634], [1135, 634], [846, 743], [978, 710], [1135, 710], [1135, 802],
  [1307, 558], [1486, 511], [1640, 511], [1746, 511], [1486, 634], [1640, 634], [1716, 634], [1486, 710],
  [1640, 710], [1737, 742], [1486, 802],
];

function HBar({ x1, x2, y, split, labelX }) {
  const dim = y + 14;
  const parts = split ? [[x1, split - 2], [split + 3, x2]] : [[x1 + 2, x2]];
  return (
    <g>
      <path d={`M${x1} ${dim}V${y}H${x2}V${dim}`} strokeDasharray="6 3 200 0" stroke="red" fill="none" />
      <path d={parts.map(([a, b]) => `M${a - 3} ${dim}H${b + 3}M${a} ${dim - 3}v6M${b} ${dim - 3}v6`).join("")} stroke="red" strokeWidth="1.3" />
      <g fill={CYAN} stroke={CYAN} strokeWidth="0.4">
        <text x={labelX ?? x1 + 1} y={y - 2}>C10@150</text>
        {parts.map(([a, b]) => (
          <text key={a} x={(a + b) / 2} y={dim - 3} textAnchor="middle">1500</text>
        ))}
      </g>
    </g>
  );
}

function VBar({ x, dx, y1, y2 }) {
  const mid = (y1 + y2) / 2;
  return (
    <g>
      <path d={`M${dx} ${y1}H${x}V${y2}H${dx}`} stroke="red" fill="none" strokeDasharray="5 2 200 0" />
      <path d={`M${dx} ${y1}V${y2}M${dx - 3} ${y1 + 2}h6M${dx - 3} ${y2}h6`} stroke="red" strokeWidth="1.3" />
      <g fill={CYAN} stroke={CYAN} strokeWidth="0.4">
        <text transform={`translate(${x - 2} ${mid + 16}) rotate(-90)`}>C10@150</text>
        <text transform={`translate(${dx - 4} ${mid + 6}) rotate(-90)`}>1500</text>
      </g>
    </g>
  );
}

function Plan() {
  return (
    <g>
      <path
        d="M787 398H1196V494H1380V398H1786V834H1537V825H1440C1404 822 1384 800 1380 762V645H1196V762C1192 800 1172 822 1140 825H1036V834H787z"
        fill="#666"
      />
      <path d="M1197 494H1255V551H1197z" />
      <path d="M1036 588H1194V637H1036z" fill="#4d5084" />
      <path d="M1197 554H1255V585H1197z" fill="#383f96" />

      {/* main frame */}
      <g stroke="#2bdc2b" strokeWidth="9" fill="none">
        <path d="M787 402H1196M1376 402H1786" />
        <path d="M1196 402H1378M1196 765H1378" strokeWidth="5" />
        <path d="M790 398V834M1783 398V834" strokeWidth="7" />
        <path d="M879 402V585M879 640V830M1036 402V830M1537 402V830M1694 402V585M1694 640V830" />
        <path d="M1193 402V765M1380 402V765" strokeWidth="8" />
        <path d="M787 588H1192M1380 588H1786M787 636H1192M1380 636H1786" strokeWidth="7" />
        <path d="M787 831H1036M1537 831H1786" strokeWidth="7" />
        <path d="M1036 765H1192M1380 765H1537M1200 643H1378M1255 494H1380" strokeWidth="7" />
        <path d="M1036 825H1138C1170 822 1190 800 1192 765M1537 825H1440C1404 822 1384 800 1382 765" strokeWidth="6" />
      </g>
      <g fill="#8000ff">
        {columns.map(([x, y]) => (
          <rect key={`${x}-${y}`} x={x - 7} y={y - 6} width="13" height="13" />
        ))}
        <path d="M1195 489h62v7h-62zM1252 494h5v15h-5zM1191 543h66v11h-66z" />
      </g>
      <path d="M1199 496H1252V549H1199z" />
      <g stroke="#f4fff4" strokeWidth="3" fill="none">
        <path d="M791 402H1196M1380 402H1784" stroke="#d4f8d4" />
        <path d="M790 402V831M1783 402V831" />
        <path d="M1194 402V762M1203 492H1245M1255 494V549M1197 551H1245" />
        <path d="M793 587H1192M1380 587H1784M793 637H1192M1380 637H1784" />
        <path d="M791 830H1036M1537 830H1784M1036 765H1192M1380 765H1537" />
        <path d="M1200 642H1378M1257 494H1380" />
        <path d="M1036 824H1138C1170 821 1188 800 1191 765M1537 824H1440C1404 821 1386 800 1383 765" />
      </g>
      <path
        d="M879 402V830M1036 402V830M1380 402V762M1537 402V830M1694 402V830"
        stroke="#f07070"
        strokeWidth="2.5"
      />

      <g fill="none">
        {beams.map((b) => (
          <Fragment key={b.join()}>
            <path d={`M${b[0]} ${b[1]}L${b[2]} ${b[3]}`} stroke="#f2c63a" strokeWidth="4.5" />
            <path d={`M${b[0]} ${b[1]}L${b[2]} ${b[3]}`} stroke="#ff6a10" strokeWidth="2.5" />
          </Fragment>
        ))}
      </g>

      <g stroke="#d01010" strokeWidth="1.2">
        <path d="M793 405H1780M821 585H1780M821 640H1780M821 762H1780" />
        <path d="M793 404V828M1192 762V828M1380 762V828" />
        <path d="M793 828H1780" stroke="#8a0000" />
      </g>
      <path
        d="M832 561V662M938 543V681M1101 730V824M1451 543V673M1451 730V824M1601 543V681M1720 561V662"
        stroke="#ff1296"
        strokeWidth="3"
      />
      <path d="M1101 543V673" stroke="#b5739c" strokeWidth="4" />
      <path d="M1102 544H1113V586M1113 641V672H1102" stroke="#f2f2f2" strokeWidth="2.5" fill="none" />
      <path d="M1114 541V586M1114 641V674M1110 544h7M1110 672h7" stroke="red" strokeWidth="1.3" />
      <path d="M1117 557V575M1117 651V668M1096 590V630" stroke="#b9b9b9" strokeWidth="3" strokeDasharray="1 2" />

      <g fontSize="6">
        {hBars.map(([x1, x2, y, split, labelX]) => (
          <HBar key={`${x1}-${y}`} x1={x1} x2={x2} y={y} split={split} labelX={labelX} />
        ))}
        {vBars.map(([x, dx, y1, y2]) => (
          <VBar key={`${x}-${y1}`} x={x} dx={dx} y1={y1} y2={y2} />
        ))}
        <path d="M1255 550L1281 573L1272 583L1246 558" stroke="red" fill="none" />
        <g fill={CYAN} stroke={CYAN} strokeWidth="0.4">
          {hCodes.map(([x, y]) => (
            <text key={`${x}-${y}`} x={x} y={y}>C10@150</text>
          ))}
          {vCodes.map(([x, y]) => (
            <text key={`${x}-${y}`} transform={`translate(${x} ${y}) rotate(-90)`}>C10@150</text>
          ))}
        </g>
        <g fill="#00f000" fontWeight="bold">
          {slabTags.map(([x, y, tag]) => (
            <g key={`${x}-${y}`}>
              <rect x={x} y={y} width="24" height="11" fill="none" stroke="red" strokeWidth="1.3" />
              <text x={x + 2} y={y + 8}>{tag}</text>
            </g>
          ))}
          {marks.map(([x, y, n]) => (
            <text key={`${x}-${y}`} x={x} y={y} textAnchor="middle">{n}</text>
          ))}
          <text transform="translate(1255 564) rotate(42)">C8@8</text>
          <text transform="translate(1265 552) rotate(42)">C8@8</text>
        </g>
      </g>

      {/* selected span */}
      <path d="M1066 587h16M1146 587h15M1068 637h15M1148 637h15" stroke="#fff" strokeWidth="4" />
      <g fill="#00ff00">
        {[[1036, 587], [1115, 587], [1194, 587], [1036, 612], [1194, 612], [1036, 637], [1115, 637], [1194, 637]].map(([x, y]) => (
          <rect key={`${x}-${y}`} x={x - 8} y={y - 7} width="15" height="15" />
        ))}
      </g>
    </g>
  );
}

function Drawing() {
  return (
    <svg
      viewBox="617 207 1303 835"
      preserveAspectRatio="xMinYMin meet"
      className="h-full w-full bg-black font-['Noto_Sans_CJK_SC',sans-serif]"
      role="img"
      aria-label="首层平面图"
    >
      <Axes />
      <Plan />
      <g strokeWidth="4" fontSize="19" textAnchor="middle">
        <path d="M680 980V955" stroke="#00ff00" />
        <path d="M680 943l6 16h-12z" fill="#00ff00" />
        <path d="M680 980H704" stroke="red" />
        <path d="M717 980l-14-6v12z" fill="red" />
        <circle cx="680" cy="980" r="7" fill="#0000c0" />
        <text x="680" y="942" fill="#00ff00">Y</text>
        <text x="725" y="987" fill="red">X</text>
      </g>
    </svg>
  );
}

function Cube({ open, text }) {
  return (
    <svg viewBox="0 0 30 30" className="size-[30px]" stroke="#3a4356" strokeWidth="1.2">
      <path d="M1 7l6-6h22v20l-6 8H1z" fill="#8596b0" />
      {open ? <path d="M1 7h22v22H1z" fill="#cfe5fb" /> : null}
      <path d="M1 7h22v22M23 7l6-6" fill="none" />
      {open ? <path d="M7 7v16h16M1 29l6-6" fill="none" /> : null}
      {text ? (
        <text x="14" y="26" fontSize="10" textAnchor="middle" fill="#2d3544" stroke="none">{text}</text>
      ) : null}
    </svg>
  );
}

function ViewTools() {
  return (
    <div className="absolute top-0 right-0 flex h-[284px] w-[41px] flex-col items-center rounded-l border border-[#b5b8bc] bg-[#97999e] pt-[9px] text-[#3a4150]">
      <button aria-label="动态观察" className="h-[37px]">
        <svg viewBox="0 0 30 32" className="h-8 w-[30px]" stroke="#4a566c">
          <ellipse cx="15" cy="16" rx="11" ry="12" fill="#8fa0b8" />
          <path d="M5 12a10 10 0 0 1 17-5C19 14 12 19 5 21a12 12 0 0 1 0-9z" fill="#c6d4e4" stroke="none" />
          <path d="M3 25C12 22 20 16 24 11" fill="none" strokeWidth="1.5" />
          <circle cx="25" cy="10" r="4.5" fill="#b6c5d8" />
          <circle cx="3" cy="25" r="2.5" fill="#777" />
        </svg>
      </button>
      <button aria-label="三维" className="h-[36px]"><Cube text="3D" /></button>
      <button aria-label="线框" className="h-[36px]"><Cube open /></button>
      <Caret className="mt-[3px] mb-[7px]" />
      <button aria-label="实体" className="h-[32px]"><Cube /></button>
      <Caret className="my-[6px]" />
      <button aria-label="旋转视图" className="h-8">
        <svg viewBox="0 0 30 30" className="size-[30px]" fill="none" stroke="currentColor" strokeWidth="2.5">
          <path d="M25 8A12 12 0 1 0 26 21" />
          <path d="M27 2v8h-8" />
        </svg>
      </button>
      <Caret className="mt-[6px]" />
      <div className="mt-[6px] mb-[7px] h-px w-7 bg-[#6f7278]" />
      <button aria-label="显示设置">
        <svg viewBox="0 0 30 30" className="size-[30px]" stroke="#3a4356" fill="none">
          <path d="M1 5l3-4h22l3 4v24H1z" fill="#8596b0" />
          <path d="M1 5h28M15 10v17M5 9l2 2 3-3M19 9l2 2 3-3" />
          <path d="M5 14h3v3H5zM5 19h3v3H5zM5 24h3v3H5zM18 14h3v3h-3zM18 19h3v3h-3zM18 24h3v3h-3zM10 15h3M10 20h3M10 25h3M23 15h3M23 20h3M23 25h3" />
        </svg>
      </button>
    </div>
  );
}

/* ---------- rebar check dialog ---------- */

function Radio({ label, checked }) {
  return (
    <label className="flex items-center gap-1">
      <input
        type="radio"
        name="bar"
        defaultChecked={checked}
        className="size-[18px] appearance-none rounded-full border border-[#8c8c8c] bg-white checked:bg-[radial-gradient(circle,#3d94f2_4px,#fff_5px)]"
      />
      {label}
    </label>
  );
}

function Check({ label }) {
  return (
    <label className="flex items-center gap-1">
      <span className="grid place-items-center">
        <input
          type="checkbox"
          defaultChecked
          className="peer col-start-1 row-start-1 size-[18px] appearance-none rounded-[3px] border border-[#b0b0b0] bg-white checked:border-[#459af3] checked:bg-[#4a9df5]"
        />
        <svg viewBox="0 0 12 12" className="pointer-events-none invisible col-start-1 row-start-1 size-3 peer-checked:visible">
          <path d="M1 6l4 4 6-8" fill="none" stroke="#fff" strokeWidth="2" />
        </svg>
      </span>
      {label}
    </label>
  );
}

function CheckDialog() {
  return (
    <section
      role="dialog"
      aria-labelledby="dialog-title"
      className="absolute top-[160px] left-[79px] z-10 flex h-[425px] w-[603px] flex-col border-r border-b-2 border-[#c5ced9] bg-[#efefef] text-[15px] text-[#1c1c1c]"
    >
      <header className="flex h-[34px] items-center justify-between bg-[#3a6ba5] pr-3 pl-[11px] text-white">
        <h2 id="dialog-title">校核板筋图元</h2>
        <button aria-label="关闭">
          <svg viewBox="0 0 12 12" className="size-[10px]" stroke="#fff" strokeWidth="2.5">
            <path d="M1 1l10 10M11 1L1 11" />
          </svg>
        </button>
      </header>
      <div className="flex h-[42px] items-center gap-[10px] pt-[5px] pl-[15px] whitespace-nowrap">
        <Radio label="负筋" />
        <Radio label="底筋" />
        <Radio label="面筋" checked />
        <Check label="布筋重叠" />
        <Check label="未标注钢筋信息" />
        <Check label="未标注伸出长度" />
      </div>
      <div className="mr-[14px] ml-[15px] h-[294px] border border-[#c3c3c3] bg-white">
        <table className="w-[483px] border-collapse text-[15px] leading-[23px] text-white">
          <thead>
            <tr className="h-[26px] border-r border-b border-[#c3c3c3] bg-[#efefef]">
              <th className="w-[189px] p-0 pt-0.5 font-normal">名称</th>
              <th className="w-[108px] p-0 pt-0.5 font-normal">楼层</th>
              <th className="p-0 pt-0.5 font-normal">问题描述</th>
            </tr>
          </thead>
          <tbody>
            <tr className="h-[24px] border-r-2 border-b-2 border-[#7c7c80] bg-[#3399ff]">
              <td className="p-0 pl-1 text-base leading-[23px]">KBSLJ-C12@200</td>
              <td className="p-0 pl-[3px]">首层</td>
              <td className="p-0 pl-[7px]">布筋范围重叠</td>
            </tr>
          </tbody>
        </table>
      </div>
      <div className="flex items-start justify-between pt-[7px] pr-[14px] pl-4">
        <div className="pt-1"><Check label="显示板筋布筋范围" /></div>
        <button className="h-[33px] w-[100px] rounded bg-[#2a80e2] text-white">刷新</button>
      </div>
      <svg viewBox="0 0 12 12" className="mr-1 ml-auto size-3" fill="#8a8a8a">
        <path d="M9 0h2v2H9zM9 4h2v2H9zM9 8h2v2H9zM5 4h2v2H5zM5 8h2v2H5zM1 8h2v2H1z" />
      </svg>
    </section>
  );
}

/* ---------- status bar ---------- */

const snapBox = "flex h-[32px] items-center justify-center gap-2 border border-[#313131]";

function StatusBar() {
  return (
    <footer className="flex h-[38px] shrink-0 items-center border-t border-b-2 border-t-[#2c2c2c] border-b-[#1c1c1c] bg-[#383838] pt-px text-[15px] whitespace-nowrap">
      <span className="w-[331px] pl-0.5 text-base">X = 367 Y = 22983</span>
      <span className="flex w-[104px] gap-1.5">层高：<span>3.9</span></span>
      <span className="flex w-[167px] gap-1.5">标高：<span>-0.05~3.85</span></span>
      <span className="w-[128px]">1(4)</span>
      <span className="w-[127px]">隐藏：0</span>
      <button aria-label="正交" className={clsx(snapBox, "w-[31px]")}>
        <svg viewBox="0 0 18 18" className="size-[18px]" fill="none" stroke="#ccc" strokeWidth="1.5">
          <path d="M2 1v15h16M2 11h5v5" />
        </svg>
      </button>
      <button aria-label="矩形选择" className="ml-1 flex h-[32px] w-[45px] items-center justify-center gap-2 border border-[#2a66a4] bg-[#143458] text-gray-300">
        <svg viewBox="0 0 20 20" className="size-5">
          <path d="M2 3h16v15H2z" fill="none" stroke="#4a86d0" strokeWidth="1.5" />
          <path d="M0 1h5v5H0z" fill="#ffb27a" stroke={O} />
        </svg>
        <Caret />
      </button>
      <button aria-label="交点" className={clsx(snapBox, "ml-2 w-[31px]")}>
        <svg viewBox="0 0 20 20" className="size-5" fill="none" stroke="#6b6b6b" strokeWidth="1.2">
          <path d="M1 1l18 18M19 1L1 19M9 9h3v3H9z" />
        </svg>
      </button>
      <button aria-label="角度" className={clsx(snapBox, "ml-2 w-[45px] text-gray-300")}>
        <svg viewBox="0 0 20 20" className="size-5" fill="none" stroke="#ccc" strokeWidth="1.5">
          <path d="M16 2L1 17h19" />
          <path d="M7 8h3v3H7z" fill="#eee" />
        </svg>
        <Caret />
      </button>
      <button aria-label="偏移" className={clsx(snapBox, "ml-1 w-[45px] text-gray-300")}>
        <svg viewBox="0 0 20 20" className="size-5" fill="none" stroke="#ccc" strokeWidth="1.5">
          <path d="M0 6h9M4 1v10" />
          <path d="M8 12h12v5H8z" fill="#ddd" stroke="none" />
        </svg>
        <Caret />
      </button>
      <button className={clsx(snapBox, "ml-1 px-[7px]")}>跨图层选择</button>
      <button className={clsx(snapBox, "ml-1 px-[7px]")}>折线选择</button>
      <span className="ml-2">按鼠标左键指定第一个角点，或拾取构件图元</span>
      <span className="mr-[45px] ml-auto text-base">250 FPS</span>
    </footer>
  );
}

export default function App() {
  return (
    <div className="relative flex h-screen flex-col overflow-hidden bg-[#383838] font-['Open_Sans','Noto_Sans_CJK_SC',sans-serif] text-[#ececec]">
      <Header />
      <Ribbon />
      <div className="flex h-[33px] shrink-0 items-center border-t border-[#2b2b2b] pl-[3px]">
        <select aria-label="楼层" className="h-[27px] w-[180px] appearance-none border border-[#272727] bg-[#484848] pb-0.5 pl-1 text-[15px] leading-6">
          <option>首层</option>
        </select>
      </div>
      <main className="flex min-h-0 flex-1">
        <NavTree />
        <LayerPanel />
        <div className="flex w-[5px] shrink-0 flex-col bg-[#5b5b5b]">
          <div className="h-[481px] bg-[#3b3b3b] pt-[414px]">
            <svg viewBox="0 0 5 10" className="h-[10px] w-[5px]"><path d="M5 0v10L1 5z" fill="#aaa" /></svg>
          </div>
        </div>
        <div className="relative min-w-0 flex-1 bg-black">
          <Drawing />
          <ViewTools />
        </div>
      </main>
      <StatusBar />
      <CheckDialog />
    </div>
  );
}
